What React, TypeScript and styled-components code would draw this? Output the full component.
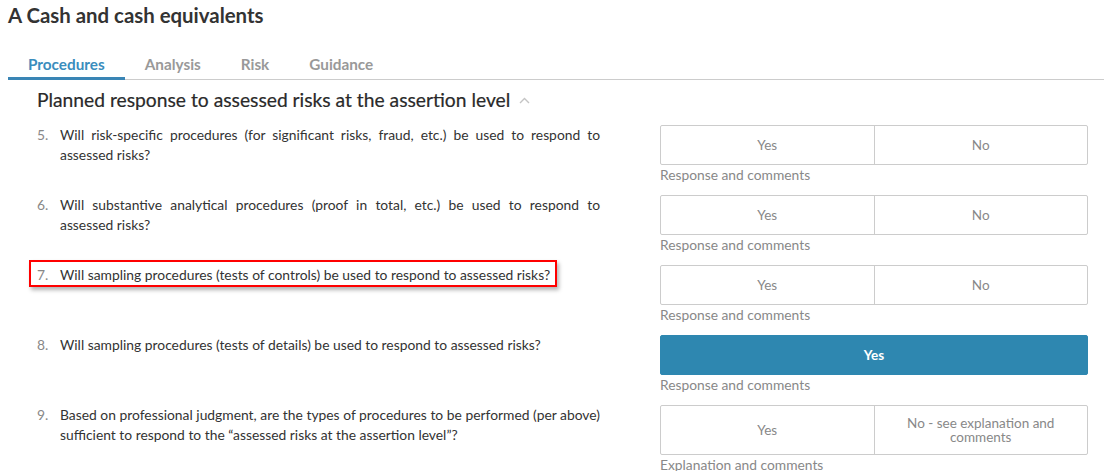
import React from "react";
import styled, { createGlobalStyle, css } from "styled-components";

const GlobalStyle = createGlobalStyle`
  html, body { margin: 0; padding: 0; background: #fff; }
  body { font-family: Lato, "Open Sans", Arial, sans-serif; color: #333; }
  * { box-sizing: border-box; }
`;

const Page = styled.div`
  padding-left: 8px;
`;

const Title = styled.h1`
  margin: 0;
  font-size: 20.4px;
  line-height: 30px;
  font-weight: 700;
  color: #333;
`;

const TabBar = styled.div`
  display: flex;
  margin-top: 16px;
  border-bottom: 1px solid #ccc;
`;

const Tab = styled.div<{ $active?: boolean }>`
  padding: 9px 20px 4px;
  font-size: 15.3px;
  line-height: 18px;
  font-weight: 700;
  margin-bottom: -1px;
  color: ${(p) => (p.$active ? "#3a8dbd" : "#999")};
  border-bottom: 3px solid ${(p) => (p.$active ? "#3a85b5" : "transparent")};
`;

const SectionHeading = styled.h2`
  margin: 8px 0 13px;
  padding-left: 29px;
  font-size: 19.25px;
  line-height: 24px;
  font-weight: 400;
  color: #2a2a2a;
  display: flex;
  align-items: center;
  -webkit-text-stroke: 0.2px #2a2a2a;
`;

const Chevron = styled.svg`
  margin-left: 9px;
  margin-top: 1px;
`;

const Rows = styled.div`
  display: flex;
  flex-direction: column;
  padding-left: 29px;
`;

const Row = styled.div`
  display: flex;
  gap: 60px;
  margin-bottom: 10px;
`;

const QuestionCol = styled.div`
  width: 563px;
  flex-shrink: 0;
  display: flex;
  align-items: flex-start;
`;

const Question = styled.div<{ $highlight?: boolean }>`
  display: flex;
  font-size: 13.85px;
  line-height: 20px;
  flex: 1;
  ${(p) =>
    p.$highlight &&
    css`
      flex: 0 0 auto;
      margin: -5px -7px -2px -8px;
      padding: 3px 5px 0 6px;
      border: 2px solid #f00;
      box-shadow: 2px 3px 4px rgba(0, 0, 0, 0.3);
    `}
`;

const Num = styled.span`
  width: 23px;
  flex-shrink: 0;
  color: #888;
`;

const QText = styled.span`
  text-align: justify;
  color: #333;
`;

const AnswerCol = styled.div`
  width: 428px;
  flex-shrink: 0;
`;

const ButtonGroup = styled.div<{ $selected?: boolean }>`
  display: flex;
  min-height: 40px;
  border: 1px solid ${(p) => (p.$selected ? "#2e87b0" : "#ccc")};
  border-radius: 2px;
  background: ${(p) => (p.$selected ? "#2e87b0" : "#fff")};
`;

const Option = styled.div<{ $selected?: boolean }>`
  flex: 1;
  display: flex;
  align-items: center;
  justify-content: center;
  text-align: center;
  padding: 10px 24px;
  font-size: 13.5px;
  line-height: 14px;
  color: ${(p) => (p.$selected ? "#fff" : "#888")};
  font-weight: ${(p) => (p.$selected ? 700 : 400)};
  & + & {
    border-left: 1px solid #ccc;
  }
`;

const Label = styled.div`
  font-size: 13.8px;
  line-height: 20px;
  color: #888;
`;

type Q = {
  n: number;
  text: string;
  options: string[];
  selected?: string;
  label: string;
  highlight?: boolean;
};

const questions: Q[] = [
  {
    n: 5,
    text: "Will risk-specific procedures (for significant risks, fraud, etc.) be used to respond to assessed risks?",
    options: ["Yes", "No"],
    label: "Response and comments",
  },
  {
    n: 6,
    text: "Will substantive analytical procedures (proof in total, etc.) be used to respond to assessed risks?",
    options: ["Yes", "No"],
    label: "Response and comments",
  },
  {
    n: 7,
    text: "Will sampling procedures (tests of controls) be used to respond to assessed risks?",
    options: ["Yes", "No"],
    label: "Response and comments",
    highlight: true,
  },
  {
    n: 8,
    text: "Will sampling procedures (tests of details) be used to respond to assessed risks?",
    options: ["Yes", "No"],
    selected: "Yes",
    label: "Response and comments",
  },
  {
    n: 9,
    text: "Based on professional judgment, are the types of procedures to be performed (per above) sufficient to respond to the \u201cassessed risks at the assertion level\u201d?",
    options: ["Yes", "No - see explanation and comments"],
    label: "Explanation and comments",
  },
];

export default function App() {
  return (
    <Page>
      <GlobalStyle />
      <Title>A Cash and cash equivalents</Title>
      <TabBar>
        <Tab $active>Procedures</Tab>
        <Tab>Analysis</Tab>
        <Tab>Risk</Tab>
        <Tab>Guidance</Tab>
      </TabBar>
      <SectionHeading>
        Planned response to assessed risks at the assertion level
        <Chevron width="11" height="7" viewBox="0 0 11 7" fill="none">
          <polyline points="1,6 5.5,1.5 10,6" stroke="#c4c4c4" strokeWidth="1.4" />
        </Chevron>
      </SectionHeading>
      <Rows>
        {questions.map((q) => (
          <Row key={q.n}>
            <QuestionCol>
              <Question $highlight={q.highlight}>
                <Num>{q.n}.</Num>
                <QText>{q.text}</QText>
              </Question>
            </QuestionCol>
            <AnswerCol>
              {q.selected ? (
                <ButtonGroup $selected>
                  <Option $selected>{q.selected}</Option>
                </ButtonGroup>
              ) : (
                <ButtonGroup>
                  {q.options.map((o) => (
                    <Option key={o}>{o}</Option>
                  ))}
                </ButtonGroup>
              )}
              <Label>{q.label}</Label>
            </AnswerCol>
          </Row>
        ))}
      </Rows>
    </Page>
  );
}
